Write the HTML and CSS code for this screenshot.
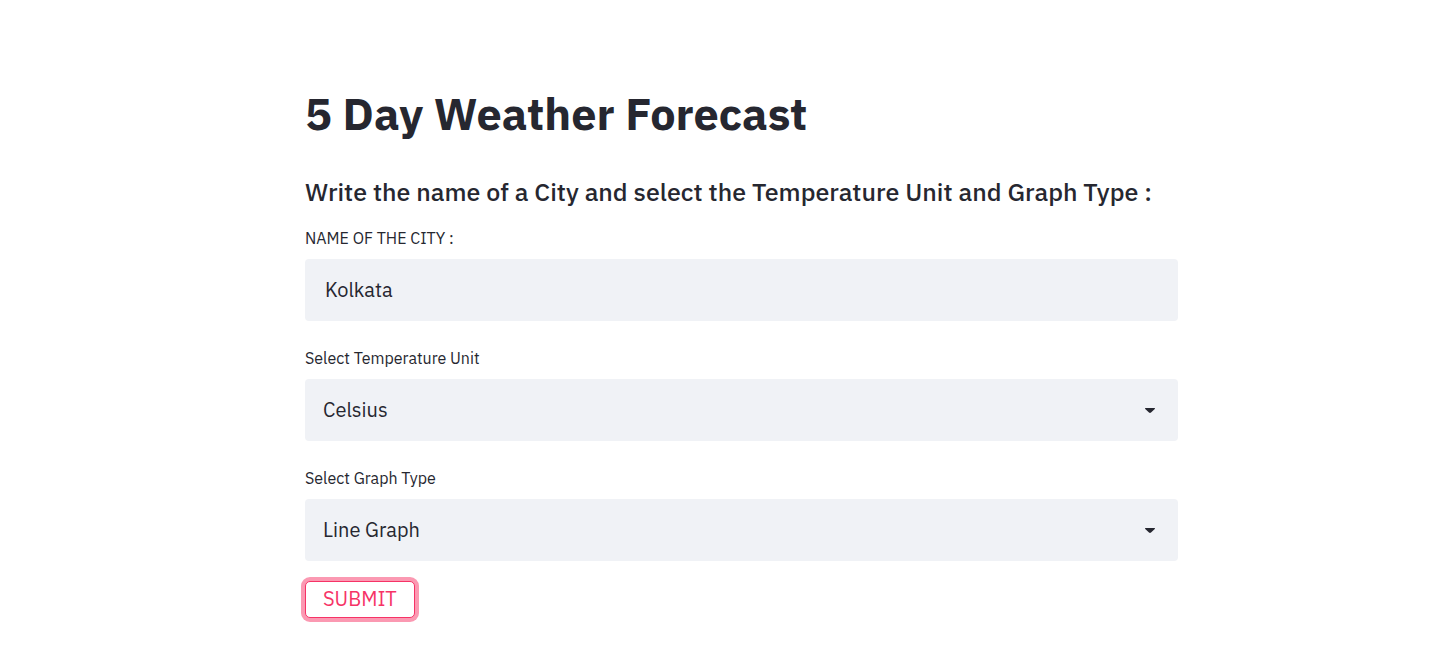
FILE: index.html
```html
<!DOCTYPE html>
<html lang="en">
<head>
<meta charset="utf-8">
<meta name="viewport" content="width=device-width, initial-scale=1">
<title>5 Day Weather Forecast</title>
<link rel="stylesheet" href="styles.css">
</head>
<body>
<main class="page">
  <h1 class="title">5 Day Weather Forecast</h1>
  <h2 class="subtitle">Write the name of a City and select the Temperature Unit and Graph Type :</h2>
  <form class="form">
    <div class="field">
      <label class="label" for="city">NAME OF THE CITY :</label>
      <input class="control" id="city" type="text" value="Kolkata">
    </div>
    <div class="field">
      <label class="label" for="unit">Select Temperature Unit</label>
      <div class="picker">
        <select class="control control-select" id="unit"><option>Celsius</option><option>Fahrenheit</option></select>
        <svg class="caret" viewBox="0 0 10 5" aria-hidden="true"><path d="M.6 0h8.800c.6 0 .8.600.4 1L6 4.500c-.6.600-1.400.600-2 0L.2 1C-.2.600 0 0 .6 0z"/></svg>
      </div>
    </div>
    <div class="field">
      <label class="label" for="graph">Select Graph Type</label>
      <div class="picker">
        <select class="control control-select" id="graph"><option>Line Graph</option><option>Bar Graph</option></select>
        <svg class="caret" viewBox="0 0 10 5" aria-hidden="true"><path d="M.6 0h8.800c.6 0 .8.600.4 1L6 4.500c-.6.600-1.400.600-2 0L.2 1C-.2.600 0 0 .6 0z"/></svg>
      </div>
    </div>
    <button class="submit" type="button">SUBMIT</button>
  </form>
</main>
</body>
</html>
```
FILE: styles.css
```css
* { box-sizing: border-box; }
body {
  margin: 0;
  background: #fff;
  color: #262730;
  font-family: "IBM Plex Sans", "Open Sans", "Noto Sans", sans-serif;
  font-weight: 400;
}
.page {
  max-width: 912px;
  margin: 0 auto;
  padding: 85px 0 40px 39px;
}
.title { margin: 0; font-size: 45px; line-height: 56px; font-weight: 700; }
.subtitle { margin: 33px 0 16px; font-size: 25px; line-height: 36px; font-weight: 500; }
.form { display: flex; flex-direction: column; align-items: stretch; }
.field { display: flex; flex-direction: column; gap: 9px; }
.field + .field { margin-top: 25px; }
.label { font-size: 16px; line-height: 24px; }
.control {
  width: 100%;
  height: 62px;
  padding: 0 20px 1px;
  border: 0;
  border-radius: 4px;
  background: #f0f2f6;
  color: #262730;
  font: inherit;
  font-size: 20px;
}
.picker { display: grid; align-items: center; }
.picker > * { grid-area: 1 / 1; }
.control-select { appearance: none; padding: 0 18px 1px; }
.caret { justify-self: end; width: 10px; height: 5px; margin-right: 23px; fill: #262730; pointer-events: none; }
.submit {
  align-self: flex-start;
  height: 37px;
  margin-top: 20px;
  padding: 0 17px 2px;
  border: 1px solid #f63366;
  border-radius: 5px;
  background: #fff;
  box-shadow: 0 0 0 4px #fb99b2;
  color: #f63366;
  font: inherit;
  font-size: 20px;
}
```
